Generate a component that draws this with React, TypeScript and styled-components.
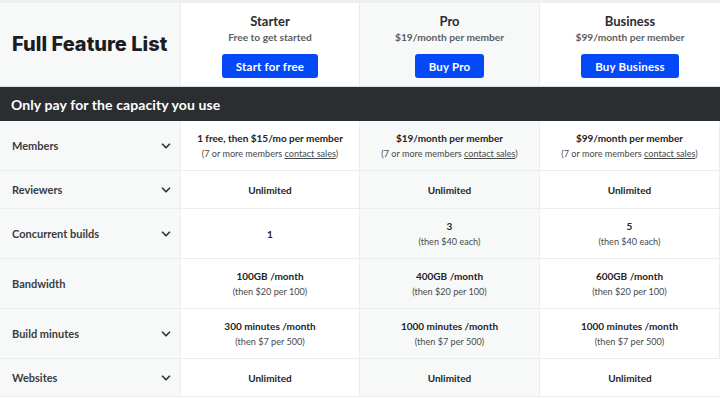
import styled, { createGlobalStyle } from 'styled-components';
import { ChevronDown } from 'lucide-react';
import { Fragment } from 'react';

const GlobalStyle = createGlobalStyle`
  body {
    margin: 0;
    background: #fff;
    font-family: 'Lato', 'Noto Sans', sans-serif;
  }
`;

const Page = styled.div`
  width: 720px;
  height: 399px;
  overflow: hidden;
  border-top: 3px solid #eef0f0;
  box-sizing: border-box;
`;

const Grid = styled.div`
  display: grid;
  grid-template-columns: 181px 179px 180px 180px;
`;

const Cell = styled.div<{ $shade?: boolean }>`
  background: ${props => (props.$shade ? '#f7f9f9' : '#fff')};
  border-right: 1px solid #eceeee;
  &:last-child {
    border-right: none;
  }
`;

const HeadCell = styled(Cell)`
  height: 84px;
  box-sizing: border-box;
  display: flex;
  flex-direction: column;
  align-items: center;
  padding-top: 10px;
  border-bottom: 1px solid #dcdede;
`;

const TitleCell = styled(HeadCell)`
  align-items: flex-start;
  justify-content: center;
  padding: 0 0 0 12px;
`;

const Title = styled.h1`
  margin: 0 0 1px;
  font-family: 'Inter', sans-serif;
  font-size: 20px;
  font-weight: 800;
  color: #1c1d1f;
`;

const PlanName = styled.div`
  font-size: 13px;
  font-weight: 700;
  color: #2b2c2e;
  line-height: 16px;
`;

const PlanPrice = styled.div`
  font-size: 10.2px;
  font-weight: 700;
  color: #5c5e60;
  line-height: 14px;
  margin-top: 1px;
`;

const BuyButton = styled.button`
  margin-top: 10px;
  height: 24px;
  padding: 0 14px;
  border: none;
  border-radius: 3px;
  background: #0449f5;
  color: #fff;
  font-family: 'Lato', sans-serif;
  font-size: 11.5px;
  font-weight: 700;
  letter-spacing: 0.2px;
  cursor: pointer;
`;

const Band = styled.div`
  height: 34px;
  background: #2b2e31;
  color: #fff;
  display: flex;
  align-items: center;
  padding-left: 11px;
  font-size: 14px;
  font-weight: 700;
  letter-spacing: 0.1px;
`;

const RowCell = styled(Cell)`
  min-height: 38px;
  box-sizing: border-box;
  border-bottom: 1px solid #eceeee;
  display: flex;
  flex-direction: column;
  align-items: center;
  justify-content: center;
  padding: 9px 6px;
  text-align: center;
`;

const FeatureCell = styled(RowCell)`
  flex-direction: row;
  justify-content: space-between;
  padding: 0 7px 0 12px;
  color: #333537;
`;

const FeatureName = styled.span`
  font-size: 11px;
  font-weight: 700;
  color: #3a3c3e;
`;

const Main = styled.div`
  font-size: 10px;
  font-weight: 700;
  color: #232426;
  line-height: 16px;
`;

const Sub = styled.div`
  font-size: 9.1px;
  color: #47494b;
  line-height: 15px;
`;

const SalesLink = styled.a`
  color: inherit;
  text-decoration: underline;
`;

type Value = { main: string; sub?: string };
type Feature = { name: string; chevron: boolean; values: Value[] };

const plans = [
  { name: 'Starter', price: 'Free to get started', cta: 'Start for free' },
  { name: 'Pro', price: '$19/month per member', cta: 'Buy Pro' },
  { name: 'Business', price: '$99/month per member', cta: 'Buy Business' },
];

const features: Feature[] = [
  {
    name: 'Members',
    chevron: true,
    values: [
      { main: '1 free, then $15/mo per member', sub: 'sales' },
      { main: '$19/month per member', sub: 'sales' },
      { main: '$99/month per member', sub: 'sales' },
    ],
  },
  {
    name: 'Reviewers',
    chevron: true,
    values: [{ main: 'Unlimited' }, { main: 'Unlimited' }, { main: 'Unlimited' }],
  },
  {
    name: 'Concurrent builds',
    chevron: true,
    values: [
      { main: '1' },
      { main: '3', sub: '(then $40 each)' },
      { main: '5', sub: '(then $40 each)' },
    ],
  },
  {
    name: 'Bandwidth',
    chevron: false,
    values: [
      { main: '100GB /month', sub: '(then $20 per 100)' },
      { main: '400GB /month', sub: '(then $20 per 100)' },
      { main: '600GB /month', sub: '(then $20 per 100)' },
    ],
  },
  {
    name: 'Build minutes',
    chevron: true,
    values: [
      { main: '300 minutes /month', sub: '(then $7 per 500)' },
      { main: '1000 minutes /month', sub: '(then $7 per 500)' },
      { main: '1000 minutes /month', sub: '(then $7 per 500)' },
    ],
  },
  {
    name: 'Websites',
    chevron: true,
    values: [{ main: 'Unlimited' }, { main: 'Unlimited' }, { main: 'Unlimited' }],
  },
];

function SubLine({ sub }: { sub?: string }) {
  if (!sub) return null;
  if (sub === 'sales') {
    return (
      <Sub>
        (7 or more members <SalesLink href="#">contact sales</SalesLink>)
      </Sub>
    );
  }
  return <Sub>{sub}</Sub>;
}

export default function App() {
  return (
    <Page>
      <GlobalStyle />
      <Grid>
        <TitleCell $shade>
          <Title>Full Feature List</Title>
        </TitleCell>
        {plans.map((p, i) => (
          <HeadCell key={p.name} $shade={i === 1}>
            <PlanName>{p.name}</PlanName>
            <PlanPrice>{p.price}</PlanPrice>
            <BuyButton>{p.cta}</BuyButton>
          </HeadCell>
        ))}
      </Grid>
      <Band>Only pay for the capacity you use</Band>
      <Grid>
        {features.map(f => (
          <Fragment key={f.name}>
            <FeatureCell $shade>
              <FeatureName>{f.name}</FeatureName>
              {f.chevron ? <ChevronDown size={14} strokeWidth={3} /> : null}
            </FeatureCell>
            {f.values.map((v, i) => (
              <RowCell key={f.name + i} $shade={i === 1}>
                <Main>{v.main}</Main>
                <SubLine sub={v.sub} />
              </RowCell>
            ))}
          </Fragment>
        ))}
      </Grid>
    </Page>
  );
}
